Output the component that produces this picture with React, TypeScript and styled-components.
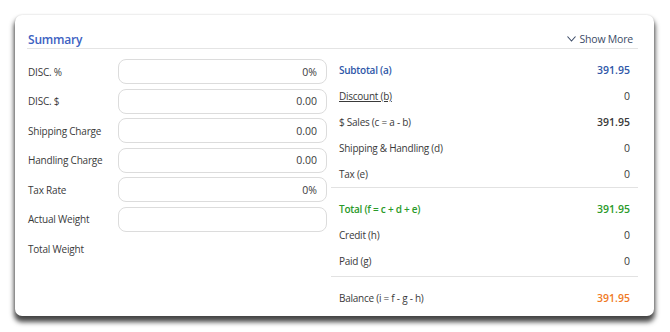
import React from "react";
import styled, { createGlobalStyle } from "styled-components";

const GlobalStyle = createGlobalStyle`
  html, body {
    margin: 0;
    min-height: 332px;
    background: #ffffff;
    font-family: "Open Sans", "Noto Sans", sans-serif;
  }
`;

const Page = styled.main`
  padding: 15px 16px 16px 15px;
`;

const Card = styled.section`
  box-sizing: border-box;
  width: 639px;
  height: 301px;
  padding: 15px 16px 0 12px;
  background: #ffffff;
  border-radius: 7px;
  box-shadow: 0 5px 5px 1px rgba(0, 0, 0, 0.72), 0 0 2px rgba(0, 0, 0, 0.15);
`;

const Header = styled.header`
  display: flex;
  align-items: center;
  justify-content: space-between;
  height: 18px;
  padding: 0 5px 0 1px;
  border-bottom: 1px solid #e4e4e4;
`;

const Title = styled.h2`
  margin: 0;
  font-size: 12px;
  font-weight: 600;
  letter-spacing: -0.2px;
  color: #3d62c2;
`;

const ShowMore = styled.button`
  display: flex;
  align-items: center;
  gap: 3px;
  padding: 0;
  border: 0;
  background: none;
  font-family: inherit;
  font-size: 10.5px;
  letter-spacing: -0.2px;
  color: #3b4a66;
  cursor: pointer;
`;

const Body = styled.div`
  display: grid;
  grid-template-columns: 300px 307px;
  column-gap: 4px;
  padding-top: 8px;
`;

const Form = styled.div`
  display: flex;
  flex-direction: column;
`;

const FieldRow = styled.label`
  display: flex;
  align-items: center;
  height: 29.5px;
  padding-left: 1px;
`;

const FieldLabel = styled.span`
  width: 90px;
  font-size: 10px;
  letter-spacing: -0.2px;
  color: #3a3a3a;
`;

const Input = styled.input`
  box-sizing: border-box;
  width: 209px;
  height: 25px;
  padding: 0 9px;
  border: 1px solid #dcdcdc;
  border-radius: 8px;
  text-align: right;
  font-family: inherit;
  font-size: 10.5px;
  color: #3a3a3a;
  outline: none;
`;

const Totals = styled.div`
  display: flex;
  flex-direction: column;
`;

const Group = styled.div<{ $top?: number; $bottom?: number; $line?: boolean }>`
  padding: ${(p) => p.$top ?? 0}px 0 ${(p) => p.$bottom ?? 0}px;
  border-bottom: ${(p) => (p.$line ? "1px solid #e2e2e2" : "none")};
`;

const TotalRow = styled.div<{ $color?: string; $strong?: boolean }>`
  display: flex;
  align-items: center;
  justify-content: space-between;
  height: 26px;
  padding: 0 8px;
  font-size: 10px;
  letter-spacing: -0.25px;
  color: ${(p) => p.$color ?? "#3a3a3a"};
  font-weight: ${(p) => (p.$strong ? 600 : 400)};
`;

const TotalLabel = styled.span<{ $underline?: boolean }>`
  text-decoration: ${(p) => (p.$underline ? "underline" : "none")};
`;

const Amount = styled.span<{ $bold?: boolean; $color?: string }>`
  font-size: 10.5px;
  letter-spacing: 0;
  font-weight: ${(p) => (p.$bold ? 600 : "inherit")};
  color: ${(p) => p.$color ?? "inherit"};
`;

const fields = [
  { label: "DISC. %", value: "0%" },
  { label: "DISC. $", value: "0.00" },
  { label: "Shipping Charge", value: "0.00" },
  { label: "Handling Charge", value: "0.00" },
  { label: "Tax Rate", value: "0%" },
  { label: "Actual Weight", value: "" },
];

const Chevron = () => (
  <svg width="9" height="6" viewBox="0 0 9 6" fill="none">
    <polyline points="0.5,0.5 4.5,5 8.5,0.5" stroke="#3b4a66" strokeWidth="1.1" />
  </svg>
);

export default function App() {
  return (
    <>
      <GlobalStyle />
      <Page>
        <Card>
          <Header>
            <Title>Summary</Title>
            <ShowMore>
              <Chevron />
              Show More
            </ShowMore>
          </Header>
          <Body>
            <Form>
              {fields.map((f) => (
                <FieldRow key={f.label}>
                  <FieldLabel>{f.label}</FieldLabel>
                  <Input defaultValue={f.value} />
                </FieldRow>
              ))}
              <FieldRow>
                <FieldLabel>Total Weight</FieldLabel>
              </FieldRow>
            </Form>
            <Totals>
              <Group $line>
                <TotalRow $color="#2f57a8" $strong>
                  <TotalLabel>Subtotal (a)</TotalLabel>
                  <Amount>391.95</Amount>
                </TotalRow>
                <TotalRow>
                  <TotalLabel $underline>Discount (b)</TotalLabel>
                  <Amount>0</Amount>
                </TotalRow>
                <TotalRow>
                  <TotalLabel>$ Sales (c = a - b)</TotalLabel>
                  <Amount $bold>391.95</Amount>
                </TotalRow>
                <TotalRow>
                  <TotalLabel>Shipping &amp; Handling (d)</TotalLabel>
                  <Amount>0</Amount>
                </TotalRow>
                <TotalRow>
                  <TotalLabel>Tax (e)</TotalLabel>
                  <Amount>0</Amount>
                </TotalRow>
              </Group>
              <Group $top={8} $bottom={2} $line>
                <TotalRow $color="#2a9a2a" $strong>
                  <TotalLabel>Total (f = c + d + e)</TotalLabel>
                  <Amount>391.95</Amount>
                </TotalRow>
                <TotalRow>
                  <TotalLabel>Credit (h)</TotalLabel>
                  <Amount>0</Amount>
                </TotalRow>
                <TotalRow>
                  <TotalLabel>Paid (g)</TotalLabel>
                  <Amount>0</Amount>
                </TotalRow>
              </Group>
              <Group $top={8}>
                <TotalRow>
                  <TotalLabel>Balance (i = f - g - h)</TotalLabel>
                  <Amount $bold $color="#f07a26">391.95</Amount>
                </TotalRow>
              </Group>
            </Totals>
          </Body>
        </Card>
      </Page>
    </>
  );
}
